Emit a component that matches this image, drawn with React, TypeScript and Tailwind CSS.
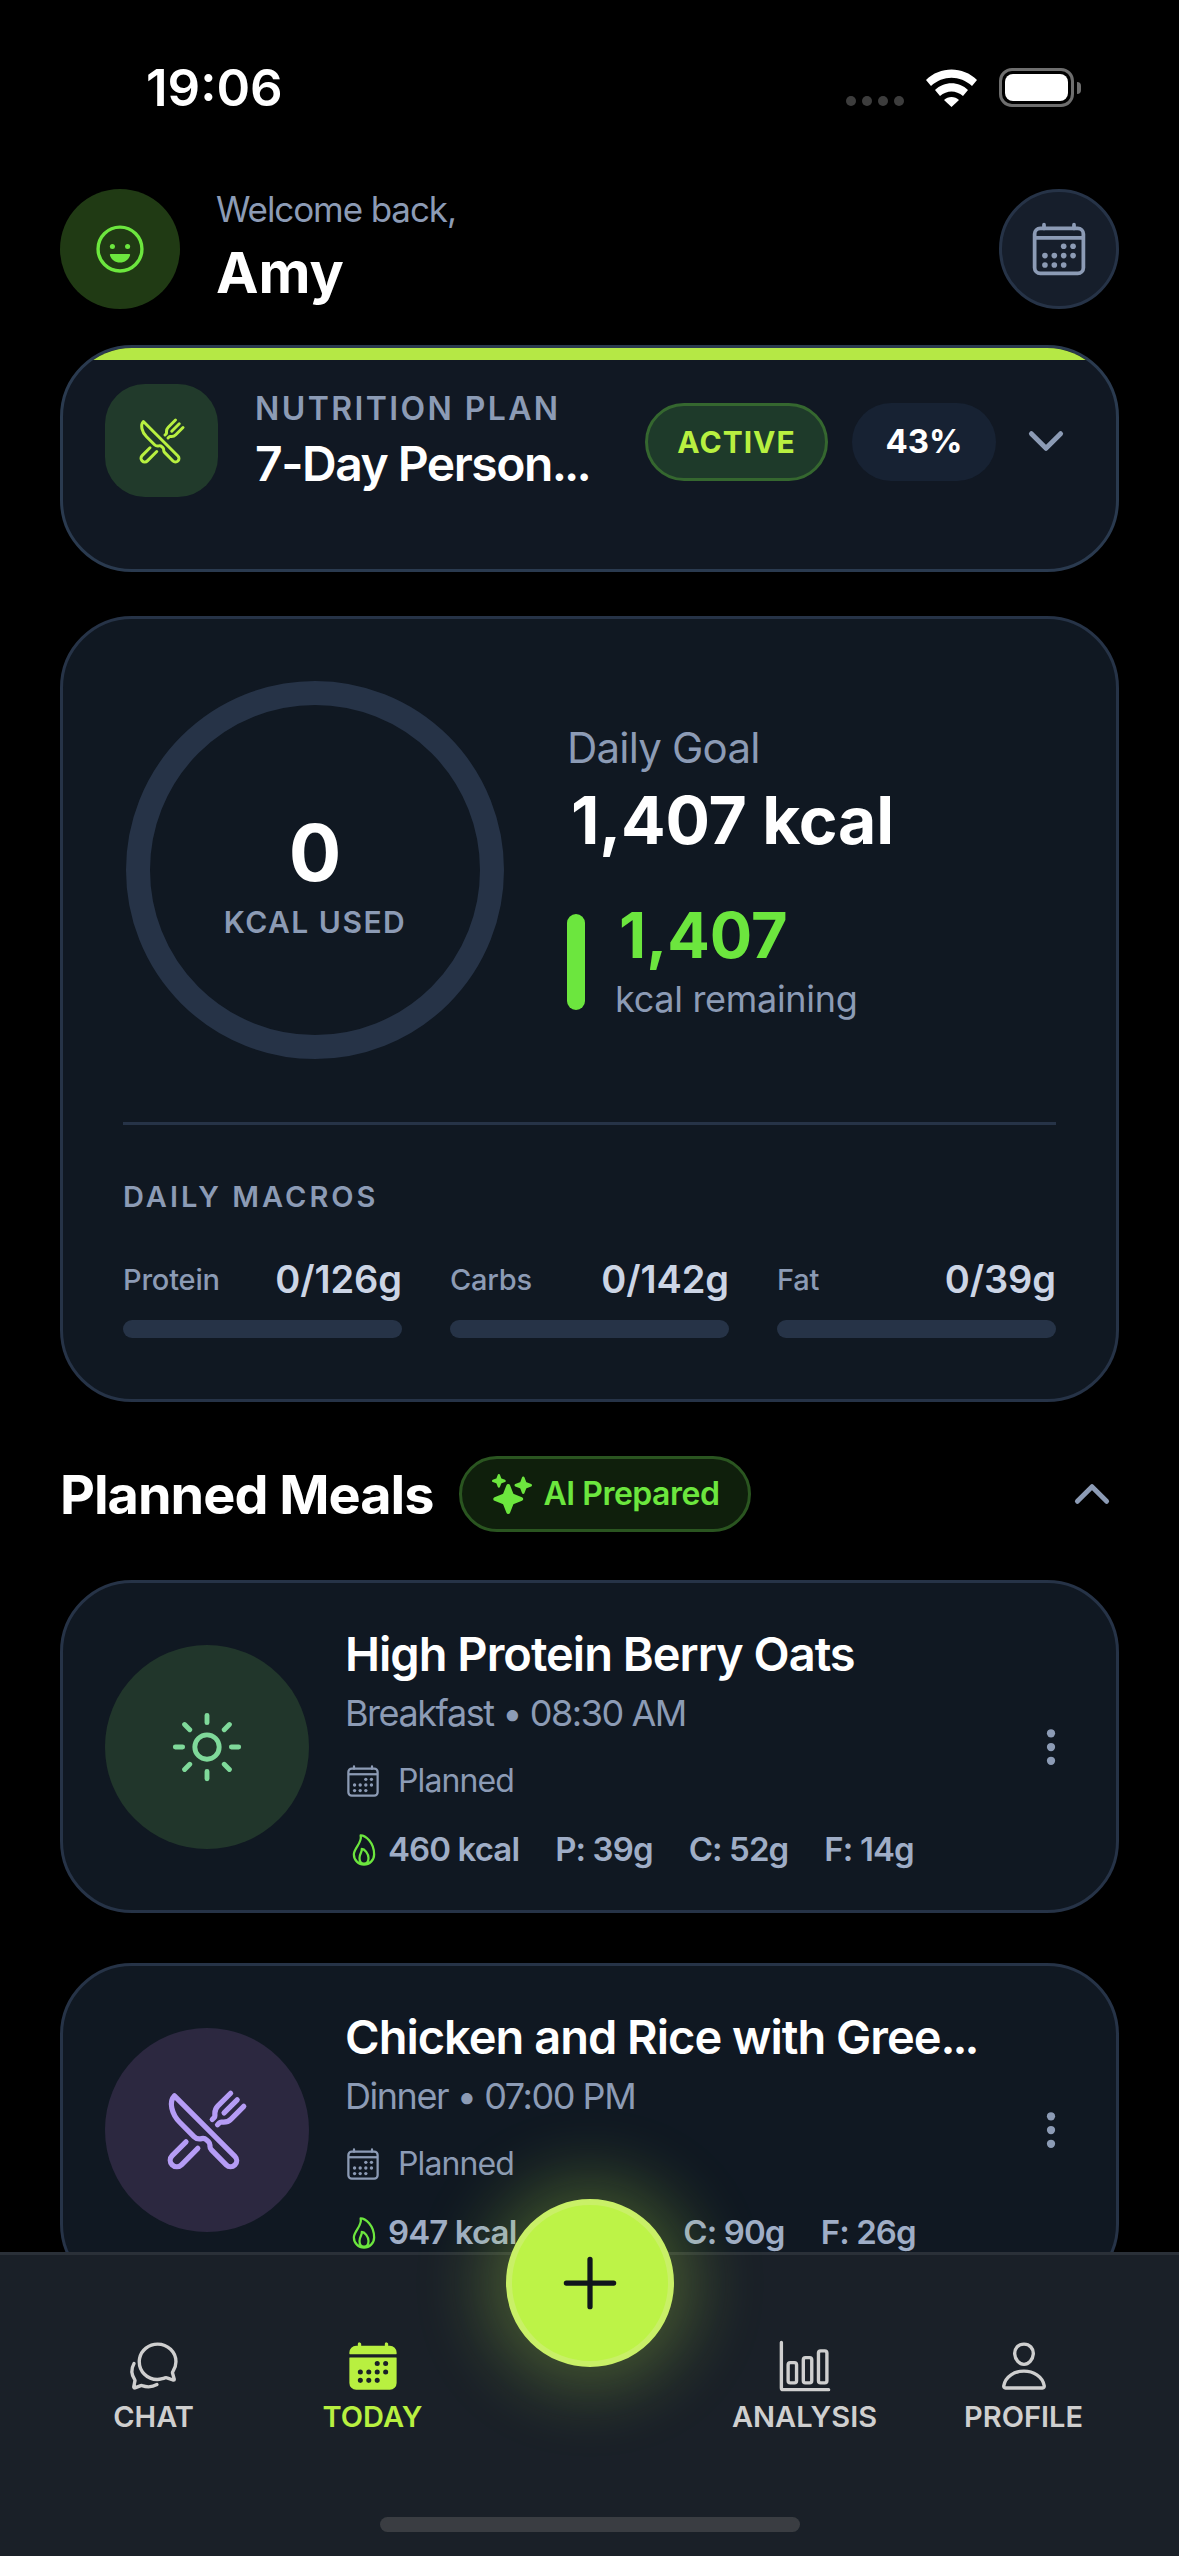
import React from 'react';
import {
  IoAdd,
  IoBarChartOutline,
  IoCalendar,
  IoCalendarOutline,
  IoChatbubblesOutline,
  IoChevronDown,
  IoChevronUp,
  IoEllipsisVertical,
  IoFlameOutline,
  IoHappyOutline,
  IoPersonOutline,
  IoRestaurantOutline,
  IoSparkles,
  IoSunnyOutline,
} from 'react-icons/io5';

const StatusBar = () => (
  <div className="flex h-[189px] items-start justify-between pl-[146px] pr-[98px] pt-[60px]">
    <span className="text-[51px] font-semibold leading-[56px] text-white">19:06</span>
    <div className="-mt-[2px] flex items-center pt-[10px]">
      <div className="mt-[26px] flex gap-[6px]">
        <span className="h-[10px] w-[10px] rounded-full bg-[#3d3d3d]" />
        <span className="h-[10px] w-[10px] rounded-full bg-[#3d3d3d]" />
        <span className="h-[10px] w-[10px] rounded-full bg-[#3d3d3d]" />
        <span className="h-[10px] w-[10px] rounded-full bg-[#3d3d3d]" />
      </div>
      <svg className="ml-[22px]" width="51" height="38" viewBox="0 0 51 38" fill="#fff">
        <path d="M0 11 C14 -3 37 -3 51 11 L46 17 C34 6 17 6 5 17 Z" />
        <path d="M9 21 C18 12 33 12 42 21 L37 27 C30 21 21 21 14 27 Z" />
        <path d="M18 31 C22 27 29 27 33 31 L25.5 38 Z" />
      </svg>
      <div className="ml-[22px] flex h-[39px] w-[75px] items-center justify-center rounded-[13px] border-[3px] border-[#6e6e6e]">
        <div className="h-[27px] w-[63px] rounded-[8px] bg-white" />
      </div>
      <div className="ml-[3px] h-[12px] w-[4px] rounded-r-full bg-[#6e6e6e]" />
    </div>
  </div>
);

const Header = () => (
  <div className="flex h-[156px] items-start justify-between">
    <div className="flex items-center gap-[36px]">
      <div className="flex h-[120px] w-[120px] items-center justify-center rounded-full bg-[#203a14]">
        <IoHappyOutline className="text-[54px] text-[#6ce63e]" />
      </div>
      <div className="-mt-[3px]">
        <p className="text-[35px] leading-[42px] tracking-[-1.1px] text-[#8c9bb5]">Welcome back,</p>
        <p className="mt-[8px] text-[57px] font-bold leading-[70px] text-white">Amy</p>
      </div>
    </div>
    <div className="flex h-[120px] w-[120px] items-center justify-center rounded-full border-[3px] border-[#263347] bg-[#161e2b]">
      <IoCalendarOutline className="text-[60px] text-[#8c9bb5]" />
    </div>
  </div>
);

const PlanCard = () => (
  <div className="h-[227px] overflow-hidden rounded-[72px] border-[3px] border-[#2a3a4f] bg-[#111823]">
    <div className="h-[12px] bg-[#b5e845]" />
    <div className="flex items-start pl-[42px] pr-[30px] pt-[24px]">
      <div className="flex h-[113px] w-[113px] shrink-0 items-center justify-center rounded-[40px] bg-[#213a2b]">
        <IoRestaurantOutline className="text-[48px] text-[#b8f040]" />
      </div>
      <div className="ml-[37px] w-[345px] pt-[5px]">
        <p className="text-[32px] font-semibold leading-[40px] tracking-[2.4px] text-[#8c9bb5]">NUTRITION PLAN</p>
        <p className="mt-[6px] whitespace-nowrap text-[48px] font-semibold leading-[58px] tracking-[-1.5px] text-white">
          7-Day Person<span className="tracking-[-3px]">...</span>
        </p>
      </div>
      <div className="ml-[45px] mt-[19px] flex h-[78px] w-[183px] shrink-0 items-center justify-center rounded-full border-[3px] border-[#35672f] bg-[#1e3a2a] text-[30px] font-bold tracking-[1px] text-[#b8f040]">
        ACTIVE
      </div>
      <div className="ml-[24px] mt-[19px] flex h-[78px] w-[144px] shrink-0 items-center justify-center rounded-full bg-[#172233] text-[33px] font-bold text-white">
        43%
      </div>
      <IoChevronDown className="ml-[24px] mt-[31px] shrink-0 text-[52px] text-[#8c9bb5]" />
    </div>
  </div>
);

const Macro = ({ label, value }: { label: string; value: string }) => (
  <div>
    <div className="flex h-[45px] items-center justify-between">
      <span className="text-[29px] font-medium tracking-[-0.2px] text-[#8c9bb5]">{label}</span>
      <span className="text-[38px] font-semibold tracking-[-0.1px] text-[#ccd5e5]">{value}</span>
    </div>
    <div className="mt-[18px] h-[18px] rounded-full bg-[#263347]" />
  </div>
);

const CalorieCard = () => (
  <div className="mt-[44px] h-[786px] rounded-[72px] border-[3px] border-[#263347] bg-[#101822] px-[60px] pt-[62px]">
    <div className="flex items-start pl-[3px]">
      <div className="flex h-[378px] w-[378px] shrink-0 flex-col items-center justify-center rounded-full border-[24px] border-[#263347] pt-[10px]">
        <span className="text-[78px] font-bold leading-[90px] text-white">0</span>
        <span className="mt-[4px] text-[30px] font-semibold leading-[40px] tracking-[1.5px] text-[#8c9bb5]">KCAL USED</span>
      </div>
      <div className="ml-[63px] pt-[41px]">
        <p className="text-[42px] leading-[52px] tracking-[-0.8px] text-[#8c9bb5]">Daily Goal</p>
        <p className="mt-[7px] pl-[4px] text-[66px] font-bold leading-[78px] tracking-[-0.2px] text-white">1,407 kcal</p>
        <div className="mt-[43px] flex items-center">
          <div className="h-[96px] w-[18px] rounded-full bg-[#6ce63e]" />
          <div className="ml-[30px]">
            <p className="pl-[4px] text-[63px] font-bold leading-[66px] text-[#6ce63e]">1,407</p>
            <p className="mt-[8px] text-[36px] leading-[46px] tracking-[-0.3px] text-[#8c9bb5]">kcal remaining</p>
          </div>
        </div>
      </div>
    </div>
    <div className="mt-[63px] h-[3px] bg-[#263347]" />
    <p className="mt-[52px] text-[29px] font-semibold leading-[40px] tracking-[3px] text-[#8c9bb5]">DAILY MACROS</p>
    <div className="mt-[40px] grid grid-cols-3 gap-[48px]">
      <Macro label="Protein" value="0/126g" />
      <Macro label="Carbs" value="0/142g" />
      <Macro label="Fat" value="0/39g" />
    </div>
  </div>
);

const MealsHeader = () => (
  <div className="mt-[54px] flex h-[76px] items-center">
    <h2 className="text-[54px] font-bold tracking-[-1px] text-white">Planned Meals</h2>
    <div className="ml-[26px] flex h-[76px] w-[292px] items-center justify-center gap-[12px] rounded-full border-[3px] border-[#2a5520] bg-[#0f1f0c] text-[#6ce63e]">
      <IoSparkles className="text-[40px]" />
      <span className="text-[32px] font-semibold tracking-[-0.5px]">AI Prepared</span>
    </div>
    <IoChevronUp className="ml-auto mr-[1px] text-[52px] text-[#8c9bb5]" />
  </div>
);

type MealProps = {
  title: React.ReactNode;
  sub: string;
  kcal: string;
  macros: string[];
  circle: string;
  icon: React.ReactNode;
};

const MealCard = ({ title, sub, kcal, macros, circle, icon }: MealProps) => (
  <div className="flex h-[333px] shrink-0 items-start rounded-[72px] border-[3px] border-[#263347] bg-[#101822] pl-[42px] pr-[43px] pt-[41px]">
    <div className={`mt-[21px] flex h-[204px] w-[204px] shrink-0 items-center justify-center rounded-full ${circle}`}>
      {icon}
    </div>
    <div className="ml-[36px] min-w-0 flex-1">
      <p className="whitespace-nowrap text-[47px] font-semibold leading-[60px] tracking-[-1px] text-white">{title}</p>
      <p className="mt-[6px] text-[36px] leading-[46px] tracking-[-1.45px] text-[#8c9bb5]">{sub}</p>
      <div className="mt-[22px] flex h-[46px] items-center gap-[17px] text-[#8c9bb5]">
        <IoCalendarOutline className="text-[36px]" />
        <span className="text-[32px] tracking-[-0.9px]">Planned</span>
      </div>
      <div className="mt-[23px] flex h-[46px] items-center text-[33px] font-semibold tracking-[-0.9px] text-[#9fadc6]">
        <IoFlameOutline className="ml-[1px] text-[36px] text-[#6ce63e]" />
        <span className="ml-[6px]">{kcal}</span>
        {macros.map((m) => (
          <span key={m} className="ml-[36px]">{m}</span>
        ))}
      </div>
    </div>
    <IoEllipsisVertical className="mt-[101px] shrink-0 text-[44px] text-[#8c9bb5]" />
  </div>
);

const NavItem = ({ icon, label, active }: { icon: React.ReactNode; label: string; active?: boolean }) => (
  <div className={`flex w-[219px] flex-col items-center ${active ? 'text-[#b8f040]' : 'text-[#cfcfcf]'}`}>
    {icon}
    <span className="mt-[6px] text-[29px] font-semibold leading-[36px]">{label}</span>
  </div>
);

const BottomNav = () => (
  <div className="absolute bottom-0 left-0 right-0 h-[304px] border-t-[3px] border-[#2a3038] bg-[#1a2028]">
    <div className="flex justify-between pl-[44px] pr-[46px] pt-[84px]">
      <div className="flex">
        <NavItem icon={<IoChatbubblesOutline className="text-[54px]" />} label="CHAT" />
        <NavItem icon={<IoCalendar className="text-[54px]" />} label="TODAY" active />
      </div>
      <div className="flex">
        <NavItem icon={<IoBarChartOutline className="text-[54px]" />} label="ANALYSIS" />
        <NavItem icon={<IoPersonOutline className="text-[54px]" />} label="PROFILE" />
      </div>
    </div>
    <div className="absolute bottom-[24px] left-[380px] h-[15px] w-[420px] rounded-full bg-[#3a3d42]" />
    <div className="absolute left-[506px] top-[-56px] flex h-[168px] w-[168px] items-center justify-center rounded-full border-[6px] border-[#c9f067] bg-[#bdf347] shadow-[0_0_70px_20px_rgba(189,243,71,0.28)]">
      <IoAdd className="text-[84px] text-[#10151c]" />
    </div>
  </div>
);

export default function App() {
  return (
    <div
      className="relative h-[2556px] w-[1179px] overflow-hidden bg-black"
      style={{ fontFamily: 'Inter, "Liberation Sans", sans-serif' }}
    >
      <StatusBar />
      <div className="px-[60px]">
        <Header />
        <PlanCard />
        <CalorieCard />
        <MealsHeader />
        <div className="mt-[48px] flex flex-col gap-[50px]">
          <MealCard
            title="High Protein Berry Oats"
            sub="Breakfast • 08:30 AM"
            kcal="460 kcal"
            macros={['P: 39g', 'C: 52g', 'F: 14g']}
            circle="bg-[#21362b]"
            icon={<IoSunnyOutline className="text-[78px] text-[#7fd99a]" />}
          />
          <MealCard
            title={
              <>
                Chicken and Rice with Gree<span className="tracking-[-3px]">...</span>
              </>
            }
            sub="Dinner • 07:00 PM"
            kcal="947 kcal"
            macros={['P: 72g', 'C: 90g', 'F: 26g']}
            circle="bg-[#2c2840]"
            icon={<IoRestaurantOutline className="text-[84px] text-[#b59cf5]" />}
          />
        </div>
      </div>
      <BottomNav />
    </div>
  );
}
